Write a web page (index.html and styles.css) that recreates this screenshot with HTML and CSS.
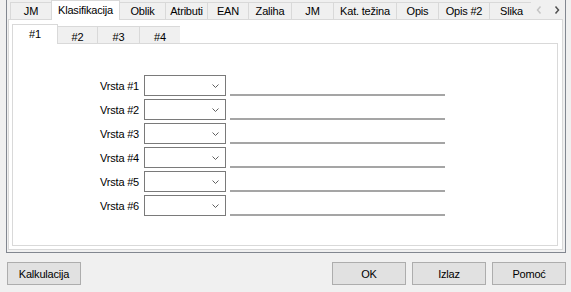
FILE: index.html
```html
<!DOCTYPE html>
<html lang="hr">

<head>
    <meta charset="UTF-8">
    <meta name="viewport" content="width=device-width, initial-scale=1.0">
    <title>Klasifikacija</title>
    <link rel="stylesheet" href="styles.css">
</head>

<body>
    <div class="frame">
        <div class="tab-bar">
            <div class="tab-list">
                <div class="tab w42">JM</div>
                <div class="tab active w69">Klasifikacija</div>
                <div class="tab w47">Oblik</div>
                <div class="tab w43">Atributi</div>
                <div class="tab w42">EAN</div>
                <div class="tab w44">Zaliha</div>
                <div class="tab w43">JM</div>
                <div class="tab w64">Kat. težina</div>
                <div class="tab w43">Opis</div>
                <div class="tab w52">Opis #2</div>
                <div class="tab w45">Slika</div>
            </div>
            <div class="tab-scroll">
                <svg width="6" height="8" viewBox="0 0 6 8" class="arrow off">
                    <polyline points="4.5,0.5 1.5,4 4.5,7.5" />
                </svg>
                <svg width="6" height="8" viewBox="0 0 6 8" class="arrow">
                    <polyline points="1.5,0.5 4.5,4 1.5,7.5" />
                </svg>
            </div>
        </div>

        <div class="tab-page">
            <div class="tab-bar sub">
                <div class="tab-list">
                    <div class="tab active w46">#1</div>
                    <div class="tab w41">#2</div>
                    <div class="tab w43">#3</div>
                    <div class="tab w42">#4</div>
                </div>
            </div>

            <div class="sub-page">
                <div class="row">
                    <label class="label">Vrsta #1</label>
                    <div class="combo"><svg width="7" height="4" viewBox="0 0 7 4"><polyline points="0.5,0.5 3.5,3.5 6.5,0.5" /></svg></div>
                    <div class="line"></div>
                </div>
                <div class="row">
                    <label class="label">Vrsta #2</label>
                    <div class="combo"><svg width="7" height="4" viewBox="0 0 7 4"><polyline points="0.5,0.5 3.5,3.5 6.5,0.5" /></svg></div>
                    <div class="line"></div>
                </div>
                <div class="row">
                    <label class="label">Vrsta #3</label>
                    <div class="combo"><svg width="7" height="4" viewBox="0 0 7 4"><polyline points="0.5,0.5 3.5,3.5 6.5,0.5" /></svg></div>
                    <div class="line"></div>
                </div>
                <div class="row">
                    <label class="label">Vrsta #4</label>
                    <div class="combo"><svg width="7" height="4" viewBox="0 0 7 4"><polyline points="0.5,0.5 3.5,3.5 6.5,0.5" /></svg></div>
                    <div class="line"></div>
                </div>
                <div class="row">
                    <label class="label">Vrsta #5</label>
                    <div class="combo"><svg width="7" height="4" viewBox="0 0 7 4"><polyline points="0.5,0.5 3.5,3.5 6.5,0.5" /></svg></div>
                    <div class="line"></div>
                </div>
                <div class="row">
                    <label class="label">Vrsta #6</label>
                    <div class="combo"><svg width="7" height="4" viewBox="0 0 7 4"><polyline points="0.5,0.5 3.5,3.5 6.5,0.5" /></svg></div>
                    <div class="line"></div>
                </div>
            </div>
        </div>
    </div>

    <div class="buttons">
        <button class="btn">Kalkulacija</button>
        <div class="btn-group">
            <button class="btn">OK</button>
            <button class="btn">Izlaz</button>
            <button class="btn">Pomoć</button>
        </div>
    </div>
</body>

</html>
```

FILE: styles.css
```css
* {
    margin: 0;
    padding: 0;
    box-sizing: border-box;
}

body {
    background: #f0f0f0;
    font-family: 'Liberation Sans', Arial, sans-serif;
    font-size: 11px;
    letter-spacing: -0.2px;
    color: #000;
}

.frame {
    margin-left: 6px;
    width: 560px;
    height: 253px;
    border: 1px solid #828790;
    border-top: none;
    padding: 0 2px 2px 1px;
}

/* tab strips */
.tab-bar {
    display: flex;
    height: 19px;
}

.tab-list {
    position: relative;
    z-index: 1;
    display: flex;
    align-items: flex-end;
    height: 20px;
    width: 523px;
    padding-left: 2px;
    overflow: hidden;
}

.tab {
    flex: none;
    height: 17px;
    margin-bottom: 1px;
    margin-right: -1px;
    border: 1px solid #d9d9d9;
    border-bottom: none;
    background: #f0f0f0;
    text-align: center;
    line-height: 13px;
    padding-top: 2px;
    white-space: nowrap;
}

.tab.active {
    height: 20px;
    margin-bottom: 0;
    background: #fff;
    padding-top: 3px;
}

.w41 { width: 41px; }
.w42 { width: 42px; }
.w43 { width: 43px; }
.w44 { width: 44px; }
.w45 { width: 45px; }
.w46 { width: 46px; }
.w47 { width: 47px; }
.w52 { width: 52px; }
.w64 { width: 64px; }
.w69 { width: 69px; }

.tab-scroll {
    flex: 1;
    display: flex;
    align-items: flex-start;
    padding: 6px 0 0 5px;
    gap: 12px;
}

.arrow polyline {
    fill: none;
    stroke: #505050;
    stroke-width: 1.5;
}

.arrow.off polyline {
    stroke: #c4c4c4;
}

.tab-page {
    height: 231px;
    border: 1px solid #d9d9d9;
    background: #fff;
    padding: 4px 4px 3px 3px;
}

.tab-bar.sub .tab-list {
    padding-left: 0;
    width: auto;
}

.tab-bar.sub .tab {
    padding-top: 4px;
}

.tab-bar.sub .tab.active {
    padding-top: 3px;
}

.sub-page {
    height: 203px;
    border: 1px solid #d9d9d9;
    padding-top: 31px;
    display: flex;
    flex-direction: column;
    gap: 3px;
}

/* form rows */
.row {
    display: flex;
    align-items: center;
    height: 21px;
}

.label {
    width: 126px;
    margin-right: 5px;
    text-align: right;
}

.combo {
    width: 82px;
    height: 21px;
    border: 1px solid #7a7a7a;
    background: #fff;
    display: flex;
    align-items: center;
    justify-content: flex-end;
    padding-right: 6px;
}

.combo polyline {
    fill: none;
    stroke: #606060;
    stroke-width: 1;
}

.line {
    width: 215px;
    height: 21px;
    margin-left: 4px;
    border-bottom: 2px solid #a5a5a5;
}

/* bottom buttons */
.buttons {
    display: flex;
    justify-content: space-between;
    margin-top: 9px;
    padding: 0 5px 0 7px;
}

.btn-group {
    display: flex;
    gap: 6px;
}

.btn {
    width: 74px;
    height: 23px;
    border: 1px solid #adadad;
    background: #e1e1e1;
    font-family: inherit;
    font-size: 11px;
    letter-spacing: inherit;
    color: #000;
}
```
